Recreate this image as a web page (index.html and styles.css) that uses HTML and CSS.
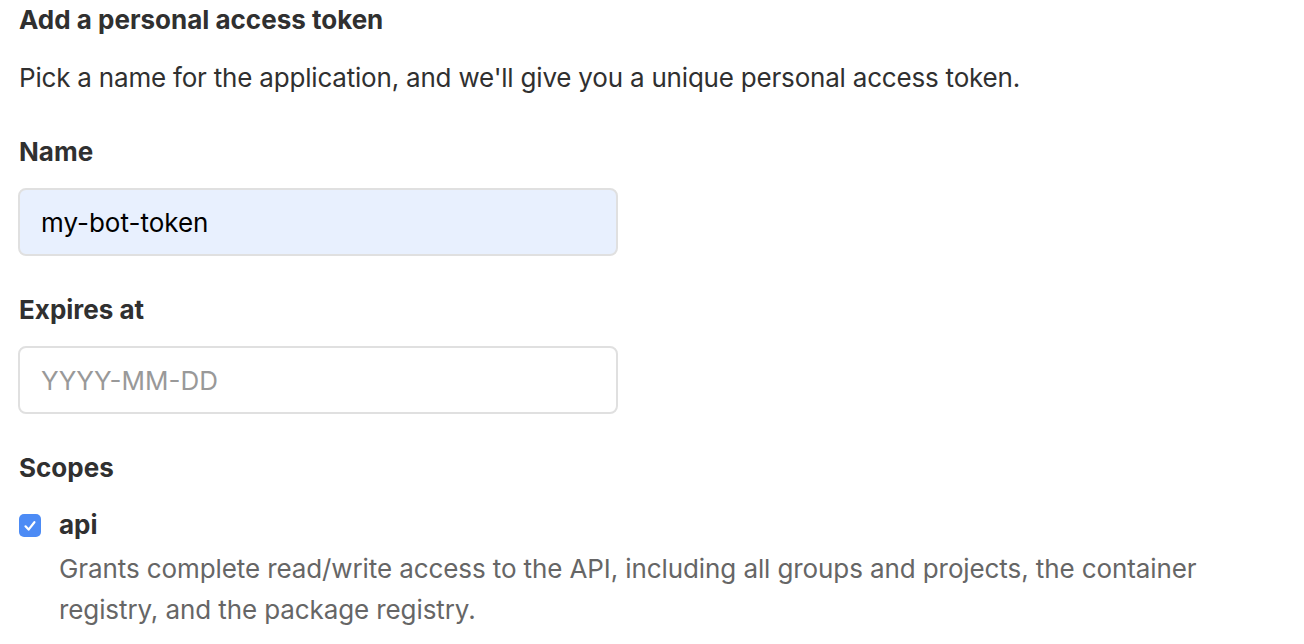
FILE: index.html
```html
<!DOCTYPE html>
<html lang="en">
<head>
<meta charset="utf-8">
<title>Add a personal access token</title>
<link rel="stylesheet" href="styles.css">
</head>
<body>
<main class="page">
  <h4 class="title">Add a personal access token</h4>
  <p class="intro">Pick a name for the application, and we'll give you a unique personal access token.</p>

  <div class="field">
    <label class="label" for="name">Name</label>
    <input class="input input-filled" id="name" type="text" value="my-bot-token">
  </div>

  <div class="field">
    <label class="label" for="exp">Expires at</label>
    <input class="input" id="exp" type="text" placeholder="YYYY-MM-DD">
  </div>

  <div class="field">
    <div class="label">Scopes</div>
    <div class="scope">
      <span class="check">
        <svg viewBox="0 0 22 22" width="22" height="22" aria-hidden="true">
          <path d="M6.5 11.3 L9.6 14.6 L15.4 7.2" fill="none" stroke="#fff" stroke-width="2.2" stroke-linecap="round" stroke-linejoin="round"/>
        </svg>
      </span>
      <div class="scope-body">
        <div class="scope-name">api</div>
        <div class="scope-desc">Grants complete read/write access to the API, including all groups and projects, the container registry, and the package registry.</div>
      </div>
    </div>
  </div>
</main>
</body>
</html>
```

FILE: styles.css
```css
html, body {
  margin: 0;
  padding: 0;
  background: #fff;
}
body {
  font-family: Inter, "Noto Sans", "Liberation Sans", sans-serif;
  color: #303030;
  font-size: 26px;
}
.page {
  padding: 0 19px;
}
.title {
  margin: 0;
  font-size: 26px;
  font-weight: 700;
  line-height: 40px;
  color: #303030;
}
.intro {
  margin: 18px 0 0;
  font-size: 26px;
  line-height: 40px;
  letter-spacing: -0.2px;
  color: #303030;
}
.field {
  margin-top: 34px;
  display: flex;
  flex-direction: column;
  align-items: flex-start;
}
.label {
  display: block;
  font-size: 26px;
  font-weight: 700;
  line-height: 40px;
  color: #303030;
}
.input {
  margin-top: 16px;
  box-sizing: border-box;
  width: 600px;
  height: 68px;
  margin-left: -1px;
  padding: 0 21px;
  border: 2px solid #e0e0e0;
  border-radius: 8px;
  background: #fff;
  font-family: inherit;
  font-size: 26px;
  color: #000;
  outline: none;
}
.input::placeholder {
  color: #999;
}
.input-filled {
  background: #e8f0fe;
}
.scope {
  margin-top: 17px;
  display: flex;
  gap: 18px;
  align-items: flex-start;
}
.check {
  margin-top: 9px;
  width: 22px;
  height: 23px;
  border-radius: 5px;
  background: #4c8bf5;
  display: flex;
  align-items: center;
  justify-content: center;
}
.scope-name {
  font-weight: 700;
  font-size: 26px;
  line-height: 40px;
  color: #303030;
}
.scope-desc {
  margin-top: 3px;
  width: 1170px;
  font-size: 26px;
  letter-spacing: -0.1px;
  line-height: 41px;
  color: #666;
}
```
